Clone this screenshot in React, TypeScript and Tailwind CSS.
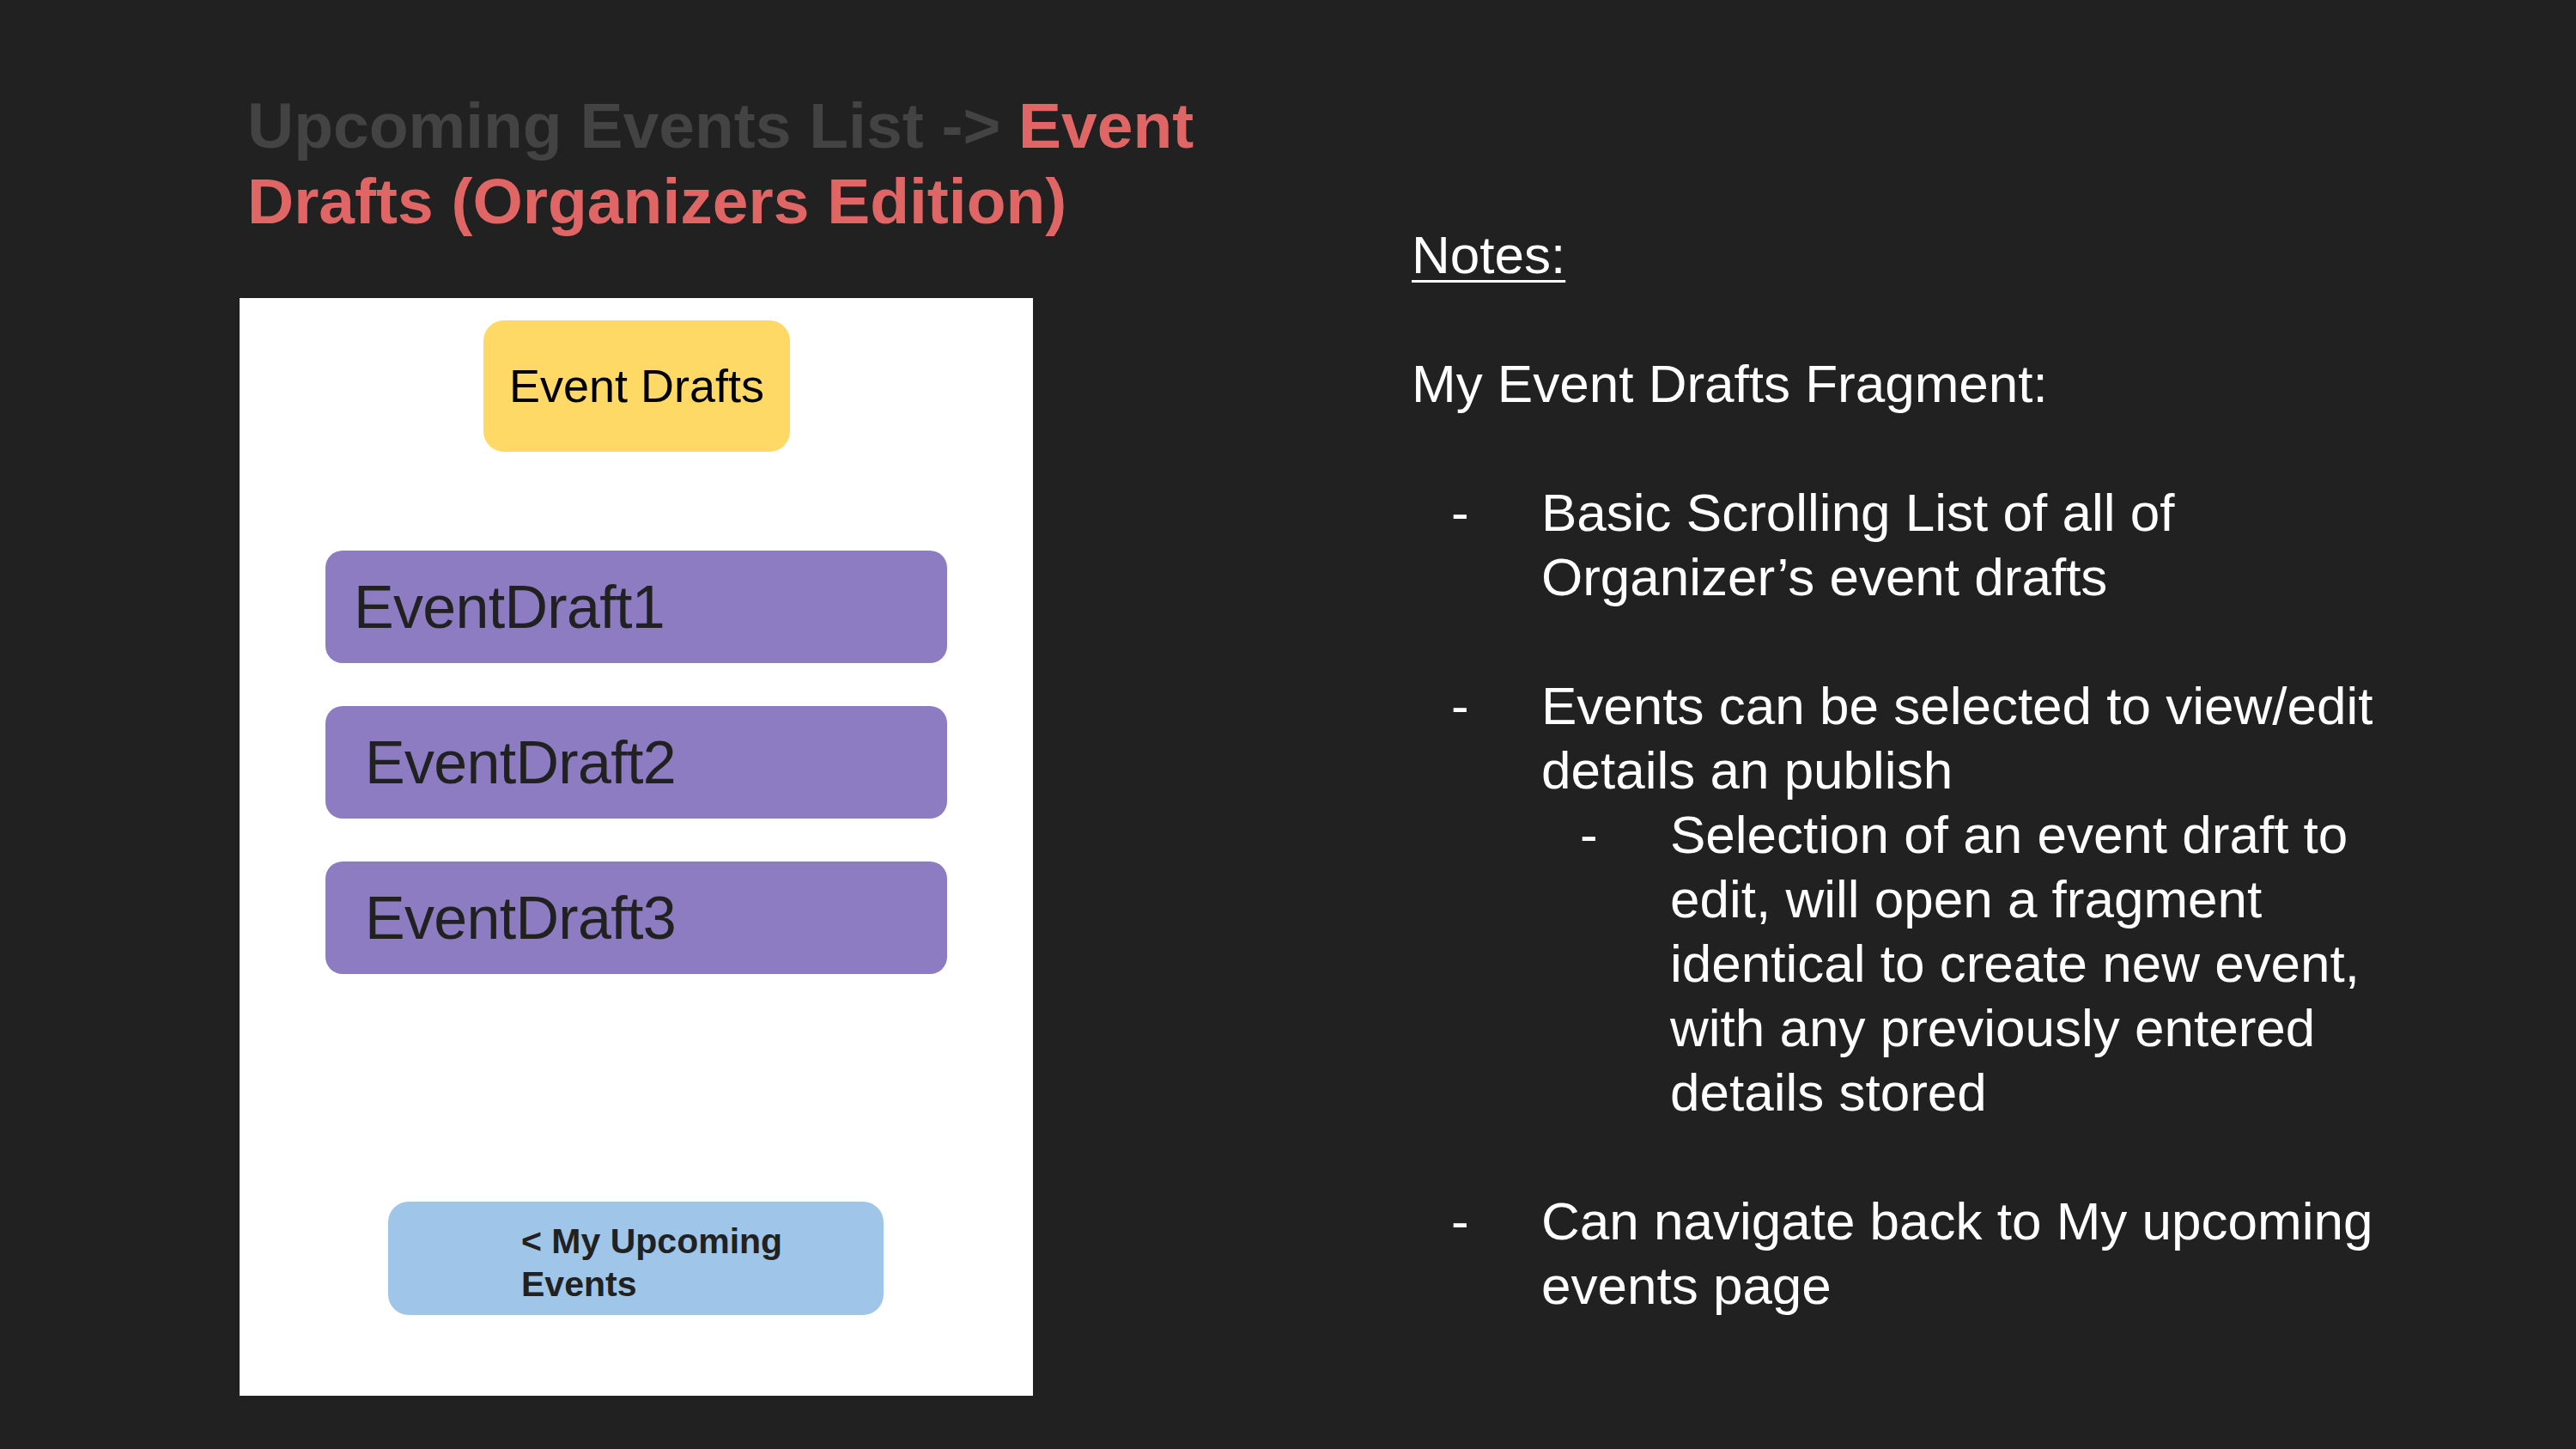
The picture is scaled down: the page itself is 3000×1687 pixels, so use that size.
const drafts = [
  { name: 'EventDraft1', pad: 'pl-[33px]' },
  { name: 'EventDraft2', pad: 'pl-[46px]' },
  { name: 'EventDraft3', pad: 'pl-[46px]' },
];

function Bullet({ children, nested = false }: { children: React.ReactNode; nested?: boolean }) {
  return (
    <div className={nested ? 'flex ml-[196px]' : 'flex ml-[46px]'}>
      <span className="w-[105px] shrink-0">-</span>
      <p className={nested ? 'w-[856px]' : 'w-[1005px]'}>{children}</p>
    </div>
  );
}

export default function App() {
  return (
    <div className="w-[3000px] h-[1687px] bg-[#212121] flex font-[family-name:'Liberation_Sans',Arial,sans-serif] overflow-hidden">
      {/* Left: title + phone mock */}
      <div className="flex flex-col pl-[279px] w-[1203px] shrink-0">
        <h1 className="ml-[9px] mt-[102px] w-[1150px] text-[75px] leading-[88px] font-bold text-[#434343]">
          Upcoming Events List -&gt; <span className="text-[#e06666]">Event Drafts (Organizers Edition)</span>
        </h1>

        <div className="mt-[69px] w-[924px] h-[1278px] bg-white flex flex-col">
          <div className="ml-[284px] mt-[26px] w-[357px] h-[153px] rounded-[24px] bg-[#ffd966] flex items-center justify-center text-[54px] text-black">
            Event Drafts
          </div>

          <div className="ml-[100px] mt-[115px] flex flex-col gap-[50px]">
            {drafts.map((d) => (
              <div
                key={d.name}
                className={`w-[724px] h-[131px] rounded-[20px] bg-[#8e7cc3] flex items-center text-[70px] leading-none text-[#212121] tracking-[-0.01em] ${d.pad}`}
              >
                {d.name}
              </div>
            ))}
          </div>

          <div className="ml-[173px] mt-[265px] w-[577px] h-[132px] rounded-[24px] bg-[#9fc5e8] pl-[155px] pt-[21px] text-[41px] leading-[50px] font-bold text-[#212121]">
            &lt; My Upcoming
            <br />
            Events
          </div>
        </div>
      </div>

      {/* Right: notes */}
      <div className="ml-[441px] pt-[259px] text-[62px] leading-[75px] text-white">
        <p className="underline decoration-[3px] underline-offset-[8px]">Notes:</p>
        <div className="h-[75px]" />
        <p>My Event Drafts Fragment:</p>
        <div className="h-[75px]" />
        <Bullet>Basic Scrolling List of all of Organizer’s event drafts</Bullet>
        <div className="h-[75px]" />
        <Bullet>Events can be selected to view/edit details an publish</Bullet>
        <Bullet nested>
          Selection of an event draft to edit, will open a fragment identical to create new event, with any previously
          entered details stored
        </Bullet>
        <div className="h-[75px]" />
        <Bullet>Can navigate back to My upcoming events page</Bullet>
      </div>
    </div>
  );
}
